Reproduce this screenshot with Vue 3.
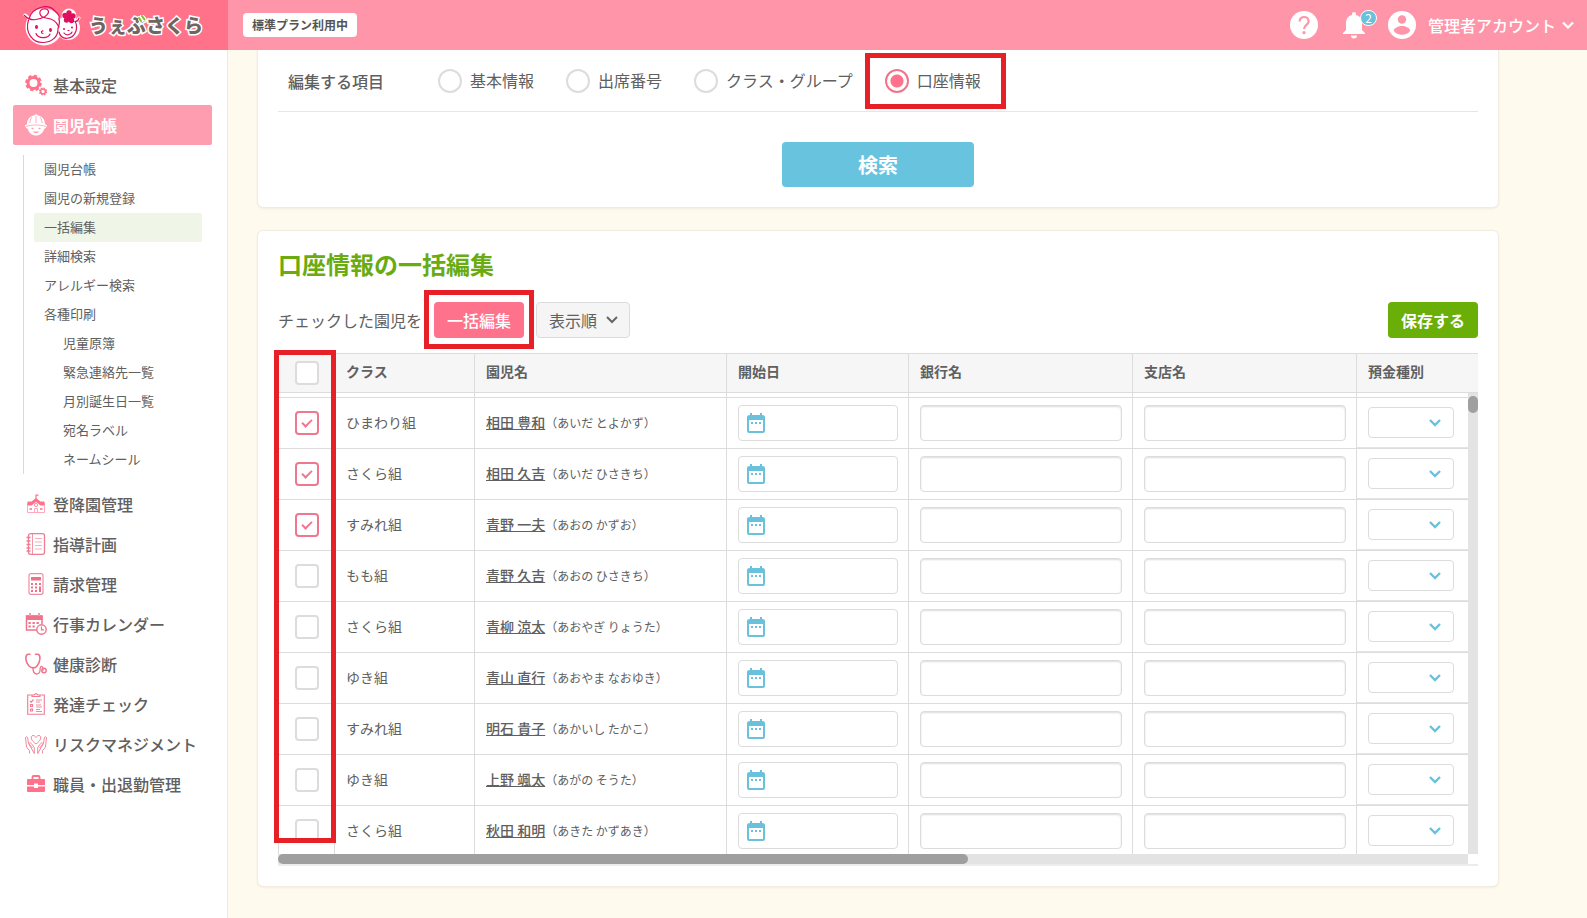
<script setup>
import { ref, reactive, computed } from 'vue'

const subItems = [
  { label: '園児台帳' },
  { label: '園児の新規登録' },
  { label: '一括編集', current: true },
  { label: '詳細検索' },
  { label: 'アレルギー検索' },
  { label: '各種印刷' },
  { label: '児童原簿', nested: true },
  { label: '緊急連絡先一覧', nested: true },
  { label: '月別誕生日一覧', nested: true },
  { label: '宛名ラベル', nested: true },
  { label: 'ネームシール', nested: true },
]

const menuItems = [
  { icon: 'school', label: '登降園管理' },
  { icon: 'notebook', label: '指導計画' },
  { icon: 'calculator', label: '請求管理' },
  { icon: 'calendar', label: '行事カレンダー' },
  { icon: 'stethoscope', label: '健康診断' },
  { icon: 'checklist', label: '発達チェック' },
  { icon: 'hands', label: 'リスクマネジメント' },
  { icon: 'briefcase', label: '職員・出退勤管理' },
]

const targets = ['基本情報', '出席番号', 'クラス・グループ', '口座情報']
const target = ref('口座情報')

const rows = reactive([
  { group: 'ひまわり組', name: '相田 豊和', kana: 'あいだ とよかず', checked: true },
  { group: 'さくら組', name: '相田 久吉', kana: 'あいだ ひさきち', checked: true },
  { group: 'すみれ組', name: '青野 一夫', kana: 'あおの かずお', checked: true },
  { group: 'もも組', name: '青野 久吉', kana: 'あおの ひさきち', checked: false },
  { group: 'さくら組', name: '青柳 涼太', kana: 'あおやぎ りょうた', checked: false },
  { group: 'ゆき組', name: '青山 直行', kana: 'あおやま なおゆき', checked: false },
  { group: 'すみれ組', name: '明石 貴子', kana: 'あかいし たかこ', checked: false },
  { group: 'ゆき組', name: '上野 颯太', kana: 'あがの そうた', checked: false },
  { group: 'さくら組', name: '秋田 和明', kana: 'あきた かずあき', checked: false },
])

const allChecked = computed({
  get: () => rows.every((r) => r.checked),
  set: (value) => rows.forEach((r) => (r.checked = value)),
})
</script>

<template>
  <div class="app">
    <header class="topbar">
      <a class="logo" href="#">
        <svg class="logo-mark" viewBox="0 0 58 42" aria-hidden="true">
          <g fill="#fff" stroke="#fff" stroke-width="3" stroke-linejoin="round">
            <circle cx="21" cy="23" r="17" />
            <circle cx="45" cy="24" r="10.500" />
            <circle cx="46" cy="12" r="6" />
            <path d="M2 11l6 5M56 14l-3 4" stroke-linecap="round" />
          </g>
          <g fill="none" stroke="#de0f5d" stroke-width="1.200" stroke-linecap="round">
            <path d="M5.500 16C1.500 29 10 39 20.500 38.500C30 38 35 32 35 25C35 22 38 20 36 15" />
            <path d="M1.500 11.500C7 18 16 16 22 12.500C28 8 25.500 4 20 5C15 7 16 13 23 14C30 15 33 17 36 23" />
            <path d="M6 15C9 3 25 -1 32 7C35.500 10 37 13 36 15" />
            <path d="M36 28C38 37 50 36 53 27C54 23 54 20 52 17.500C54 17.500 55.500 16 56 14" />
            <path d="M13 29.500C15 35 25 35 27 30M20 27C18 26.500 18 29.500 20 29.500" />
            <path d="M41 29C43 32 48 31 49 28M45 26.500h1" />
          </g>
          <g fill="#de0f5d">
            <ellipse cx="13.500" cy="23" rx="1.500" ry="2" />
            <ellipse cx="27.500" cy="26" rx="1.500" ry="2" />
            <circle cx="41" cy="25" r="1" />
            <circle cx="49" cy="23.500" r="1" />
            <circle cx="46" cy="9" r="2.700" />
            <circle cx="42" cy="11.500" r="2.700" />
            <circle cx="50" cy="12" r="2.700" />
            <circle cx="43.500" cy="16" r="2.700" />
            <circle cx="48.500" cy="16.500" r="2.700" />
            <circle cx="46" cy="13" r="2.500" />
          </g>
        </svg>
        <span class="logo-text">うぇ<span class="logo-leaf">ぶ<svg viewBox="0 0 8 7" aria-hidden="true"><path d="M1 3l2 3M4 1l2.500 3.500" stroke="#fff" stroke-width="4" stroke-linecap="round" /><path d="M1 3l2 3M4 1l2.500 3.500" stroke="#7ac02c" stroke-width="2" stroke-linecap="round" /></svg></span>さくら</span>
      </a>
      <div class="topbar-main">
        <span class="plan">標準プラン利用中</span>
        <div class="tools">
          <button class="icon-btn help" type="button" aria-label="ヘルプ">
            <svg viewBox="0 0 28 28" aria-hidden="true">
              <circle cx="14" cy="14" r="14" fill="#fff" />
              <path d="M9.600 10.500C9.600 4.500 18.600 4.500 18.600 10.500C18.600 13.700 14 14.200 14 18" fill="none" stroke="#ff95a8" stroke-width="2.200" />
              <circle cx="14" cy="21.700" r="1.600" fill="#ff95a8" />
            </svg>
          </button>
          <button class="icon-btn bell" type="button" aria-label="お知らせ">
            <svg viewBox="0 0 22 28" aria-hidden="true">
              <path d="M11 1a2 2 0 0 1 2 2v1c4 1 6 4 6 8v7l3 3v1H0v-1l3-3v-7c0-4 2-7 6-8V3a2 2 0 0 1 2-2zM8 24.500h6a3 3 0 0 1-6 0z" fill="#fff" />
            </svg>
            <span class="count">2</span>
          </button>
          <button class="account" type="button">
            <svg class="avatar" viewBox="0 0 28 28" aria-hidden="true">
              <circle cx="14" cy="14" r="14" fill="#fff" />
              <circle cx="14" cy="8.500" r="4.200" fill="#ff95a8" />
              <path d="M5.600 19.500c2.500-6 14.300-6 16.800 0c-3.500 5.800-13.300 5.800-16.800 0z" fill="#ff95a8" />
            </svg>
            <span>管理者アカウント</span>
            <svg class="chev" viewBox="0 0 12 8" aria-hidden="true"><path d="M1 1.500l5 5l5-5" fill="none" stroke="#fff" stroke-width="2.200" /></svg>
          </button>
        </div>
      </div>
    </header>

    <div class="body">
      <nav class="side">
        <a class="menu" href="#">
          <svg viewBox="0 0 22 22" aria-hidden="true" fill="none" stroke="#ff728a">
            <circle cx="8.500" cy="9" r="5.500" stroke-width="3" />
            <circle cx="8.500" cy="9" r="7.400" stroke-width="1.800" stroke-dasharray="3.500 2.310" />
            <circle cx="18" cy="17.500" r="2.400" stroke-width="1.500" />
            <circle cx="18" cy="17.500" r="3.500" stroke-width="1.200" stroke-dasharray="1.600 1.150" />
          </svg>基本設定</a>
        <a class="menu active" href="#">
          <svg viewBox="0 0 22 22" aria-hidden="true">
            <path d="M11 0l1.500 1.200C17.500 2 20 6 20 10l2 1.500c-.500 2-1.500 3-2.500 3C18 19 15 21.500 11 21.500S4 19 2.500 14.500C1.500 14.500.500 13.500 0 11.500L2 10C2 6 4.500 2 9.500 1.200z" fill="#fff" />
            <path d="M1 12.500c6-2 14-2 20 0M11 2v7M7 3c-1.500 2-2 4-2 6M15 3c1.500 2 2 4 2 6" fill="none" stroke="#ff9db0" stroke-width=".8" />
            <path d="M6.500 14.500h2M13.500 14.500h2" stroke="#ff9db0" stroke-width="1.400" />
            <path d="M8 17.500h6c-1 2-5 2-6 0z" fill="#ff9db0" />
          </svg>園児台帳</a>
        <ul class="sub">
          <li v-for="s in subItems" :key="s.label">
            <a href="#" :class="{ current: s.current, nested: s.nested }">{{ s.label }}</a>
          </li>
        </ul>
        <a v-for="m in menuItems" :key="m.label" class="menu" href="#">
          <svg v-if="m.icon === 'school'" viewBox="0 0 22 22" aria-hidden="true">
            <path d="M11 1.500v5M11 2.200h2.500" stroke="#ff728a" stroke-width="1.200" />
            <path d="M11 5l4.500 3.500H19q1 1 1 4h-4.500L11 9l-4.500 3.500H2q0-3 1-4h3.500z" fill="#ff728a" />
            <path d="M2.500 12.500v7h17v-7M9.500 19.500v-4h3v4" fill="none" stroke="#ffabba" />
            <path d="M4.500 15h2.500v2H4.500zM15 15h2.500v2H15z" fill="#ff8fa3" />
            <circle cx="11" cy="12" r="1.600" fill="none" stroke="#ff728a" stroke-width=".8" />
          </svg>
          <svg v-else-if="m.icon === 'notebook'" viewBox="0 0 22 22" aria-hidden="true" fill="none" stroke="#ef7d92">
            <rect x="3.500" y=".7" width="16" height="20.600" rx="2" stroke-width="1.300" />
            <path d="M7.500 1v20" stroke-width=".8" />
            <path d="M1.500 4.500h4M1.500 8h4M1.500 11.500h4M1.500 15h4M1.500 18h4" stroke-width="1.400" />
            <path d="M10 5.500h7M10 9h7M10 12.500h7M10 16h7" stroke-width=".6" />
          </svg>
          <svg v-else-if="m.icon === 'calculator'" viewBox="0 0 22 22" aria-hidden="true">
            <rect x="4" y=".7" width="14" height="20.600" rx="2" fill="none" stroke="#ef8ea0" stroke-width="1.200" />
            <path d="M6 4h10v3.500H6zM6 10h2v2H6zM10 10h2v2h-2zM14 10h2v2h-2zM6 13.500h2v2H6zM10 13.500h2v2h-2zM6 17h2v2H6zM10 17h2v2h-2zM14 13.500h2V19h-2z" fill="#ef6f87" />
          </svg>
          <svg v-else-if="m.icon === 'calendar'" viewBox="0 0 22 22" aria-hidden="true">
            <path d="M13 17H1.500V3H17v8" fill="none" stroke="#f0738a" stroke-width="1.500" />
            <path d="M1 2.500h16.500V7H1zM4 0h2v4H4zM13 0h2v4h-2z" fill="#f0738a" />
            <path d="M3.500 9h2.300v2H3.500zM7.500 9h2.300v2H7.500zM11.500 9h2.300v2h-2.300zM3.500 12.500h2.300v2H3.500zM7.500 12.500h2.300v2H7.500z" fill="#f0738a" />
            <path d="M5 0v3M14 0v3" stroke="#fff" stroke-width=".6" />
            <circle cx="16.500" cy="16.500" r="4.700" fill="#fff" stroke="#f0738a" stroke-width="1.400" />
            <path d="M16.500 13.500v3.300h2.500" fill="none" stroke="#f0738a" stroke-width="1.200" />
          </svg>
          <svg v-else-if="m.icon === 'stethoscope'" viewBox="0 0 22 22" aria-hidden="true" fill="none" stroke="#f0738a" stroke-width="1.600" stroke-linecap="round">
            <path d="M5 1.200H3C0 2 0 9 4 13C6.500 15.500 10 15.500 12 13C16 8 15.500 2 13 1.200H10.500" />
            <path d="M8 15c0 8 6.500 7 7 3c0-2 0-5 2-4.500c2 1 .200 3 1 4" stroke-width="1.300" />
            <circle cx="19" cy="17.500" r="2.200" stroke-width="1.400" />
          </svg>
          <svg v-else-if="m.icon === 'checklist'" viewBox="0 0 22 22" aria-hidden="true" fill="none" stroke="#ef7d92">
            <path d="M7 2H2.700v19.300h16.600V2H15M7 3.500V2h2l2-1.500L13 2h2v1.500z" stroke-width="1.100" />
            <path d="M5 8l1.200 1.200L8.500 6.500" stroke-width="1.200" />
            <path d="M5.500 11.500h2v2h-2zM5.500 16h2v2h-2z" stroke-width="1.200" />
            <path d="M11 7h6M11 9h4M11 12h5M11 14h6M11 16.500h4M11 18.500h6" stroke-width=".9" />
          </svg>
          <svg v-else-if="m.icon === 'hands'" viewBox="0 0 22 22" aria-hidden="true" fill="none" stroke="#ef7d92" stroke-width=".9" stroke-linejoin="round">
            <path d="M11 11C5 7 5.500 2.500 8 2.500c1.500 0 2.500 1 3 2c.500-1 1.500-2 3-2c2.500 0 3 4.500-3 8.500z" />
            <path d="M4.500 20.500v-3L1.500 14L.500 4.500C1 3.500 2.500 3.500 2.700 5L3.500 10.500l4 4.500M3.800 10.800c.500-1.500 2-1.300 2.500-.300l3 4v6z" />
            <path d="M17.500 20.500v-3l3-3.500l1-9.500C21 3.500 19.500 3.500 19.300 5l-.8 5.500l-4 4.500M18.200 10.800c-.500-1.500-2-1.300-2.500-.300l-3 4v6z" />
          </svg>
          <svg v-else viewBox="0 0 22 22" aria-hidden="true">
            <path d="M7.500 6V4q0-1 1-1h5q1 0 1 1v2" fill="none" stroke="#ff728a" stroke-width="1.800" />
            <path d="M3 6h16q1 0 1 1v5h-7v-1.500H9V12H2V7q0-1 1-1zM2 13.500h7V15h4v-1.500h7V18q0 1-1 1H3q-1 0-1-1z" fill="#ff728a" />
          </svg>{{ m.label }}</a>
      </nav>

      <main class="content">
        <section class="card search">
          <div class="targets" role="radiogroup" aria-labelledby="targets-title">
            <span id="targets-title" class="targets-title">編集する項目</span>
            <label v-for="t in targets" :key="t" class="radio">
              <input v-model="target" type="radio" name="target" :value="t">
              <span>{{ t }}</span>
              <i v-if="t === '口座情報'" class="mark mark-radio"></i>
            </label>
          </div>
          <button class="btn-search" type="button">検索</button>
        </section>

        <section class="card edit">
          <h1>口座情報の一括編集</h1>
          <div class="toolbar">
            <span>チェックした園児を</span>
            <span class="bulk">
              <button class="btn pink" type="button">一括編集</button>
              <i class="mark mark-bulk"></i>
            </span>
            <button class="btn order" type="button">表示順<svg viewBox="0 0 12 8" aria-hidden="true"><path d="M1 1l5 5l5-5" fill="none" stroke="#666" stroke-width="2" /></svg></button>
            <button class="btn green" type="button">保存する</button>
          </div>

          <div class="table-area">
            <div class="viewport">
              <table>
                <colgroup>
                  <col class="c-check"><col class="c-group"><col class="c-name"><col class="c-date"><col><col><col class="c-type">
                </colgroup>
                <thead>
                  <tr>
                    <th class="check" scope="col"><input v-model="allChecked" class="box" type="checkbox" aria-label="すべて選択"></th>
                    <th scope="col">クラス</th>
                    <th scope="col">園児名</th>
                    <th scope="col">開始日</th>
                    <th scope="col">銀行名</th>
                    <th scope="col">支店名</th>
                    <th scope="col">預金種別</th>
                  </tr>
                </thead>
                <tbody>
                  <tr class="peek" aria-hidden="true"><td v-for="n in 7" :key="n"></td></tr>
                  <tr v-for="r in rows" :key="r.name">
                    <td class="check"><input v-model="r.checked" class="box" type="checkbox" :aria-label="r.name"></td>
                    <td class="label">{{ r.group }}</td>
                    <td class="label"><a class="name" href="#">{{ r.name }}</a><span class="kana">（{{ r.kana }}）</span></td>
                    <td>
                      <div class="date">
                        <svg viewBox="0 0 20 21" aria-hidden="true">
                          <path d="M4 0h2v2h8V0h2v2q3 0 3 2v14q0 2-2 2H3q-2 0-2-2V4q0-2 3-2zM3 7v11h14V7z" fill="#6ac1dc" fill-rule="evenodd" />
                          <path d="M5 9h2v2H5zM9 9h2v2H9zM13 9h2v2h-2z" fill="#6ac1dc" />
                        </svg>
                        <input type="text" aria-label="開始日">
                      </div>
                    </td>
                    <td><input class="text" type="text" aria-label="銀行名"></td>
                    <td><input class="text" type="text" aria-label="支店名"></td>
                    <td class="type">
                      <div class="select">
                        <select aria-label="預金種別"><option></option></select>
                        <svg viewBox="0 0 12 8" aria-hidden="true"><path d="M1 1l5 5l5-5" fill="none" stroke="#6ac1dc" stroke-width="2.400" /></svg>
                      </div>
                    </td>
                  </tr>
                </tbody>
              </table>
              <div class="vbar"><div class="vthumb"></div></div>
            </div>
            <div class="hbar"><div class="hthumb"></div></div>
            <i class="mark mark-check"></i>
          </div>
        </section>
      </main>
    </div>
  </div>
</template>

<style>
body {
  background: #fffaee;
}
</style>

<style scoped>
.app {
  display: flex;
  flex-direction: column;
  min-height: 100vh;
  font-family: "Noto Sans CJK JP", "Noto Sans", sans-serif;
  font-size: 16px;
  line-height: 24px;
  color: #606060;
}
.app *,
.app *::before {
  box-sizing: border-box;
}
button,
input,
select {
  font: inherit;
  color: inherit;
  margin: 0;
}
button {
  border: 0;
  cursor: pointer;
  white-space: nowrap;
}
a {
  color: inherit;
  text-decoration: none;
}
svg {
  display: block;
  flex: none;
}

/* header */
.topbar {
  display: flex;
  height: 50px;
  color: #fff;
}
.logo {
  display: flex;
  align-items: center;
  gap: 8px;
  width: 228px;
  padding-left: 23px;
  background: #ff728a;
}
.logo-mark {
  width: 58px;
  height: 42px;
}
.logo-text {
  font-size: 19px;
  font-weight: 900;
  color: #6f6663;
  -webkit-text-stroke: 3px #fff;
  paint-order: stroke fill;
  white-space: nowrap;
}
.logo-leaf {
  position: relative;
}
.logo-leaf svg {
  position: absolute;
  top: 4px;
  right: 0;
  width: 8px;
  height: 7px;
}
.topbar-main {
  display: flex;
  flex: 1;
  align-items: center;
  justify-content: space-between;
  padding: 0 13px 0 15px;
  background: #ff95a8;
}
.plan {
  padding: 0 9px 1px;
  border-radius: 4px;
  background: #fff;
  color: #555;
  font-size: 12px;
  font-weight: 700;
  line-height: 23px;
}
.tools {
  display: flex;
  align-items: center;
}
.icon-btn {
  position: relative;
  padding: 0;
  background: none;
}
.help svg,
.avatar {
  width: 28px;
  height: 28px;
}
.bell {
  margin: 0 23px 0 25px;
}
.bell svg {
  width: 22px;
  height: 28px;
}
.count {
  position: absolute;
  top: -1px;
  left: 17px;
  width: 17px;
  height: 16px;
  border: 1px solid #fff;
  border-radius: 8px;
  background: #6ac1dc;
  color: #fff;
  font-size: 12px;
  line-height: 14px;
  text-align: center;
}
.account {
  display: flex;
  align-items: center;
  padding: 0;
  background: none;
  color: #fff;
  font-weight: 500;
}
.account span {
  margin: 0 6px 0 12px;
}
.chev {
  width: 12px;
  height: 8px;
}

/* sidebar */
.body {
  display: flex;
  flex: 1;
}
.side {
  flex: none;
  width: 228px;
  padding: 15px 15px 0 13px;
  border-right: 1px solid #f0e9e0;
  background: #fff;
}
.menu {
  display: flex;
  align-items: center;
  gap: 6px;
  height: 40px;
  padding-left: 12px;
  border-radius: 2px;
  font-weight: 500;
  white-space: nowrap;
}
.menu svg {
  width: 22px;
  height: 22px;
}
.menu.active {
  background: #ff9db0;
  color: #fff;
  font-weight: 700;
}
.sub {
  margin: 10px;
  padding: 0 0 0 10px;
  border-left: 1px solid #d9d9d9;
  list-style: none;
  font-size: 13px;
}
.sub a {
  display: block;
  padding: 0 0 2px 10px;
  border-radius: 2px;
  line-height: 27px;
}
.sub a.nested {
  padding-left: 29px;
}
.sub a.current {
  background: #f0f6e7;
}

/* content */
.content {
  flex: 1;
  min-width: 0;
  padding: 0 30px 31px;
}
.card {
  max-width: 1240px;
  padding: 20px;
  border-radius: 5px;
  background: #fff;
  box-shadow: 0 0 0 1px #f0ece2, 0 1px 3px #e4e0d4;
}
.search {
  padding-top: 0;
  border-radius: 0 0 5px 5px;
  clip-path: inset(0 -4px -4px);
}
.targets {
  display: flex;
  align-items: center;
  gap: 32px;
  padding: 18px 10px 17px;
  border-bottom: 1px solid #e6e6e6;
}
.targets-title {
  width: 118px;
  font-weight: 500;
}
.radio {
  position: relative;
  display: flex;
  align-items: center;
  gap: 8px;
}
.radio span {
  padding-bottom: 2px;
}
.radio input {
  appearance: none;
  width: 24px;
  height: 24px;
  border: 2px solid #dcdcdc;
  border-radius: 50%;
  background: #fff;
}
.radio input:checked {
  border-color: #f0748c;
  background: radial-gradient(circle, #ff728a 6px, #fff 7px);
}
.btn-search {
  display: block;
  width: 192px;
  height: 45px;
  margin: 30px auto 0;
  border-radius: 4px;
  background: #68c3df;
  color: #fff;
  font-size: 20px;
  font-weight: 700;
}
.edit {
  margin-top: 24px;
}
h1 {
  margin: 0;
  color: #6aab12;
  font-size: 24px;
  font-weight: 700;
  line-height: 26px;
}
.toolbar {
  display: flex;
  align-items: center;
  gap: 12px;
  margin: 25px 0 15px;
}
.bulk {
  position: relative;
  display: flex;
}
.btn {
  display: flex;
  align-items: center;
  height: 36px;
  padding: 0 13px;
  border-radius: 4px;
}
.pink {
  background: #ff728c;
  color: #fff;
  font-weight: 500;
}
.order {
  gap: 9px;
  padding: 0 11px 0 12px;
  border: 1px solid #dcdcdc;
  background: #f5f5f5;
}
.order svg {
  width: 12px;
  height: 8px;
}
.green {
  margin-left: auto;
  background: #6aae08;
  color: #fff;
  font-weight: 700;
}

/* table */
.table-area {
  position: relative;
  border-bottom: 2px solid #ececec;
}
.viewport {
  position: relative;
  height: 501px;
  overflow: hidden;
}
table {
  width: 100%;
  border-spacing: 0;
  table-layout: fixed;
  font-size: 14px;
}
.c-check {
  width: 56px;
}
.c-group {
  width: 140px;
}
.c-name {
  width: 252px;
}
.c-date {
  width: 182px;
}
.c-type {
  width: 122px;
}
th,
td {
  height: 51px;
  padding: 0 10px 0 11px;
  border-left: 1px solid #dcdcdc;
  border-bottom: 1px solid #dcdcdc;
  text-align: left;
  white-space: nowrap;
}
th {
  height: 40px;
  padding-bottom: 4px;
  border-top: 1px solid #dcdcdc;
  background: #f6f6f6;
  font-weight: 700;
}
.peek td {
  height: 5px;
}
.label,
.type {
  padding-bottom: 2px;
}
.check {
  padding: 0;
  text-align: center;
}
.box {
  appearance: none;
  display: block;
  width: 24px;
  height: 24px;
  margin: 0 auto;
  border: 2px solid #dcdcdc;
  border-radius: 4px;
  background: #fff;
}
.box:checked {
  border-color: #ef7890;
}
.box:checked::before {
  content: "";
  display: block;
  width: 10px;
  height: 6px;
  margin: 6px auto 0;
  border: solid #ef7890;
  border-width: 0 0 2px 2px;
  transform: rotate(-45deg);
}
.name {
  font-weight: 500;
  text-decoration: underline;
}
.kana {
  font-size: 12px;
}
.date,
.text {
  width: 100%;
  height: 36px;
  border: 1px solid #dcdcdc;
  border-radius: 4px;
  background: #fff;
}
.date {
  display: flex;
  align-items: center;
  padding: 0 7px;
}
.date svg {
  width: 20px;
  height: 21px;
}
.date input {
  flex: 1;
  min-width: 0;
  border: 0;
  background: none;
}
.text {
  display: block;
  padding: 0 8px;
  box-shadow: inset 0 1px 2px #dcdcdc;
}
.type {
  box-shadow: inset 0 -1px #e4e4e4;
}
.select {
  position: relative;
  width: 86px;
}
.select select {
  appearance: none;
  display: block;
  width: 100%;
  height: 31px;
  border: 1px solid #dcdcdc;
  border-radius: 4px;
  background: #fff;
}
.select svg {
  position: absolute;
  top: 12px;
  right: 13px;
  width: 12px;
  height: 8px;
  pointer-events: none;
}
.vbar {
  position: absolute;
  top: 40px;
  right: 0;
  bottom: 0;
  width: 10px;
  padding-top: 3px;
  background: #e3e3e3;
}
.vthumb {
  height: 17px;
  border-radius: 5px;
  background: #9f9f9f;
}
.hbar {
  margin-right: 10px;
  background: #e3e3e3;
}
.hthumb {
  width: 58%;
  height: 10px;
  border-radius: 5px;
  background: #9f9f9f;
}

/* highlight frames */
.mark {
  position: absolute;
  border: 5px solid #e71f27;
  pointer-events: none;
}
.mark-radio {
  inset: -15px -25px -15px -20px;
}
.mark-bulk {
  inset: -12px -10px -11px;
}
.mark-check {
  top: -3px;
  left: -4px;
  width: 62px;
  bottom: 21px;
}
</style>
